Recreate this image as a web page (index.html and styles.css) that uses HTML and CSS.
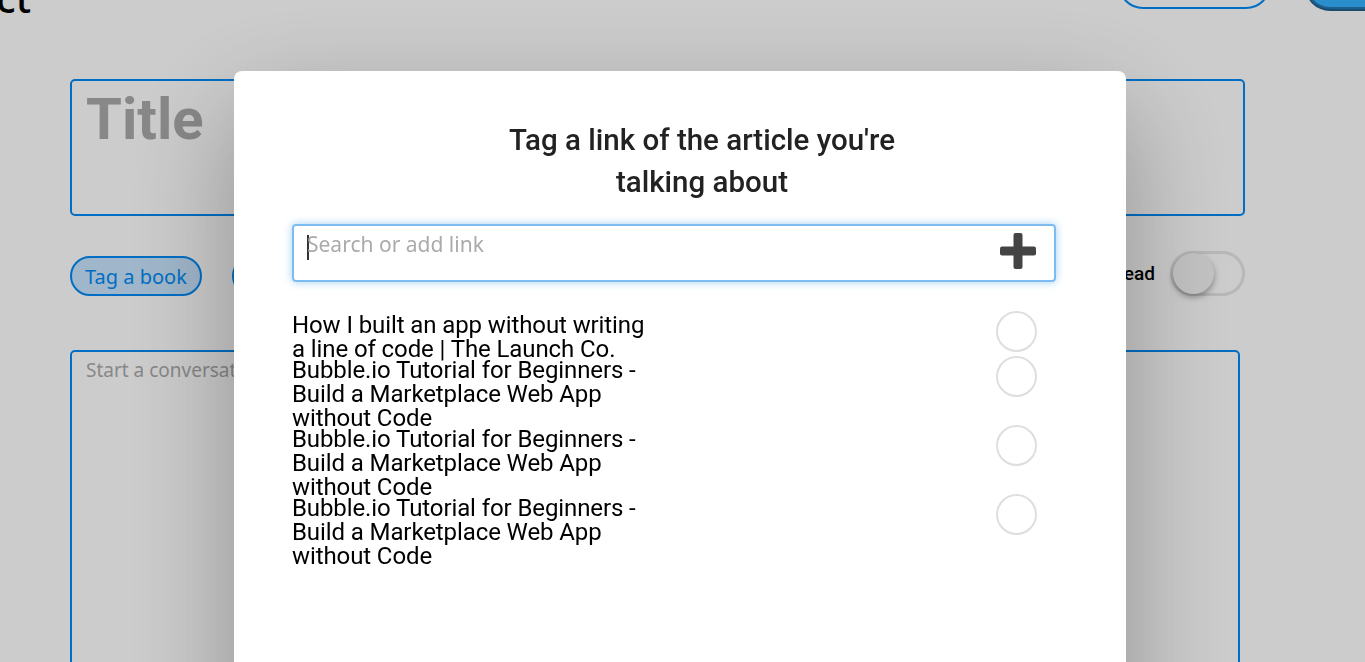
FILE: index.html
```html
<!DOCTYPE html>
<html lang="en">
<head>
<meta charset="utf-8">
<title>Tag a link</title>
<link rel="stylesheet" href="styles.css">
</head>
<body>
<div class="page">
  <header class="page-header">
    <h1 class="page-title">ct</h1>
    <div class="header-actions">
      <button class="btn-outline" aria-label="Save draft"></button>
      <button class="btn-fill" aria-label="Post"></button>
    </div>
  </header>
  <div class="title-box"><span class="title-ph">Title</span></div>
  <div class="tag-row">
    <div class="tags">
      <button class="tag-pill active">Tag a book</button>
      <button class="tag-pill">Tag a link</button>
    </div>
    <div class="toggle-wrap">
      <span class="toggle-label">Already read</span>
      <span class="toggle"><span class="knob"></span></span>
    </div>
  </div>
  <div class="convo-box"><span class="convo-ph">Start a conversation...</span></div>
</div>

<div class="overlay">
  <div class="modal">
    <div class="modal-inner">
      <h2 class="modal-title">Tag a link of the article you're talking about</h2>
      <div class="search">
        <span class="caret"></span><span class="search-ph">Search or add link</span>
        <svg class="plus" width="36" height="36" viewBox="0 0 36 36" aria-hidden="true">
          <rect x="13.5" y="0" width="9" height="36" rx="2" fill="#444"/>
          <rect x="0" y="13.5" width="36" height="9" rx="2" fill="#444"/>
        </svg>
      </div>
      <ul class="results">
        <li class="result"><span class="result-text">How I built an app without writing a line of code | The Launch Co.</span><span class="check"></span></li>
        <li class="result"><span class="result-text">Bubble.io Tutorial for Beginners - Build a Marketplace Web App without Code</span><span class="check"></span></li>
        <li class="result"><span class="result-text">Bubble.io Tutorial for Beginners - Build a Marketplace Web App without Code</span><span class="check"></span></li>
        <li class="result"><span class="result-text">Bubble.io Tutorial for Beginners - Build a Marketplace Web App without Code</span><span class="check"></span></li>
      </ul>
    </div>
  </div>
</div>
</body>
</html>
```

FILE: styles.css
```css
* { box-sizing: border-box; }
html, body { margin: 0; padding: 0; height: 100%; overflow: hidden; background: #fff; }
body { font-family: "Noto Sans", "Open Sans", sans-serif; }

.page { padding: 0 0 0 70px; width: 1365px; }

.page-header {
  display: flex;
  justify-content: space-between;
  align-items: flex-end;
  margin-top: -41px;
  margin-left: -74px;
  height: 50px;
}
.page-title {
  margin: 0 0 -9px;
  font-family: "Noto Sans", sans-serif;
  font-weight: 500;
  font-size: 40px;
  line-height: 40px;
  color: #000;
}
.header-actions { display: flex; gap: 34px; margin-right: -60px; }
.btn-outline, .btn-fill {
  height: 50px;
  border-radius: 25px;
}
.btn-outline { width: 153px; border: 2px solid #008af5; background: #fff; }
.btn-fill { width: 120px; border: 2px solid #2576b0; background: #35b2ff; box-shadow: 0 2px 0 #1f5f8e; }

.title-box {
  margin-top: 70px;
  width: 1175px;
  height: 137px;
  border: 2px solid #008af5;
  border-radius: 5px;
  padding: 4px 14px;
}
.title-ph {
  font-family: "Roboto", sans-serif;
  font-weight: 700;
  font-size: 58px;
  line-height: 68px;
  color: #aaa;
}

.tag-row {
  margin-top: 34px;
  width: 1175px;
  height: 46px;
  display: flex;
  justify-content: space-between;
  align-items: center;
}
.tags { display: flex; gap: 30px; align-self: flex-end; }
.tag-pill {
  height: 40px;
  padding: 0 13px;
  border-radius: 20px;
  border: 2px solid #008af5;
  background: #fff;
  color: #008af5;
  font-family: "Noto Sans", sans-serif;
  font-size: 20px;
}
.tag-pill.active { background: #c8e4fd; }
.toggle-wrap { display: flex; align-items: center; gap: 15px; }
.toggle-label { font-family: "Roboto", sans-serif; font-weight: 500; font-size: 19px; color: #000; }
.toggle {
  width: 75px;
  height: 45px;
  border-radius: 23px;
  border: 3px solid #e6e6e6;
  background: #fff;
  display: flex;
  align-items: center;
}
.knob {
  width: 41px;
  height: 41px;
  border-radius: 50%;
  background: #f4f4f4;
  box-shadow: 0 3px 6px rgba(0,0,0,0.35);
}

.convo-box {
  margin-top: 54px;
  width: 1170px;
  height: 400px;
  border: 2px solid #008af5;
  border-radius: 5px;
  padding: 5px 14px;
}
.convo-ph { font-family: "Noto Sans", sans-serif; font-size: 19px; color: #aaa; }

.overlay {
  position: fixed;
  inset: 0;
  background: rgba(0,0,0,0.2);
}
.modal {
  position: absolute;
  left: 234px;
  top: 71px;
  width: 892px;
  height: 720px;
  background: #fff;
  border-radius: 8px;
  box-shadow: 0 40px 110px rgba(0,0,0,0.3);
}
.modal-inner { padding: 48px 70px 0 58px; }
.modal-title {
  margin: 0 0 0 calc(50% - 215px + 28px);
  width: 430px;
  text-align: center;
  font-family: "Roboto", sans-serif;
  font-weight: 500;
  font-size: 29.5px;
  line-height: 42px;
  color: #222;
}
.search {
  margin-top: 21px;
  height: 58px;
  border: 2px solid #7dbcf0;
  border-radius: 4px;
  box-shadow: 0 0 8px rgba(102,175,233,0.6);
  display: flex;
  align-items: flex-start;
  padding: 3px 18px 0 13px;
}
.caret { width: 2px; height: 25px; background: #333; margin-top: 6px; margin-right: -2px; }
.search-ph {
  font-family: "Noto Sans", sans-serif;
  font-size: 21px;
  line-height: 30px;
  color: #aaa;
}
.plus { margin-left: auto; margin-top: 4px; }

.results { list-style: none; margin: 29px 0 0; padding: 0; }
.result {
  display: flex;
  align-items: flex-start;
  justify-content: space-between;
  margin-bottom: -5px;
  padding-right: 19px;
}
.result-text {
  width: 365px;
  padding: 2px 0 0 0;
  font-family: "Roboto", sans-serif;
  font-size: 24px;
  line-height: 24px;
  color: #000;
  letter-spacing: -0.1px;
}
.check {
  width: 41px;
  height: 41px;
  border-radius: 50%;
  border: 2px solid #dedede;
  flex: none;
}
```
